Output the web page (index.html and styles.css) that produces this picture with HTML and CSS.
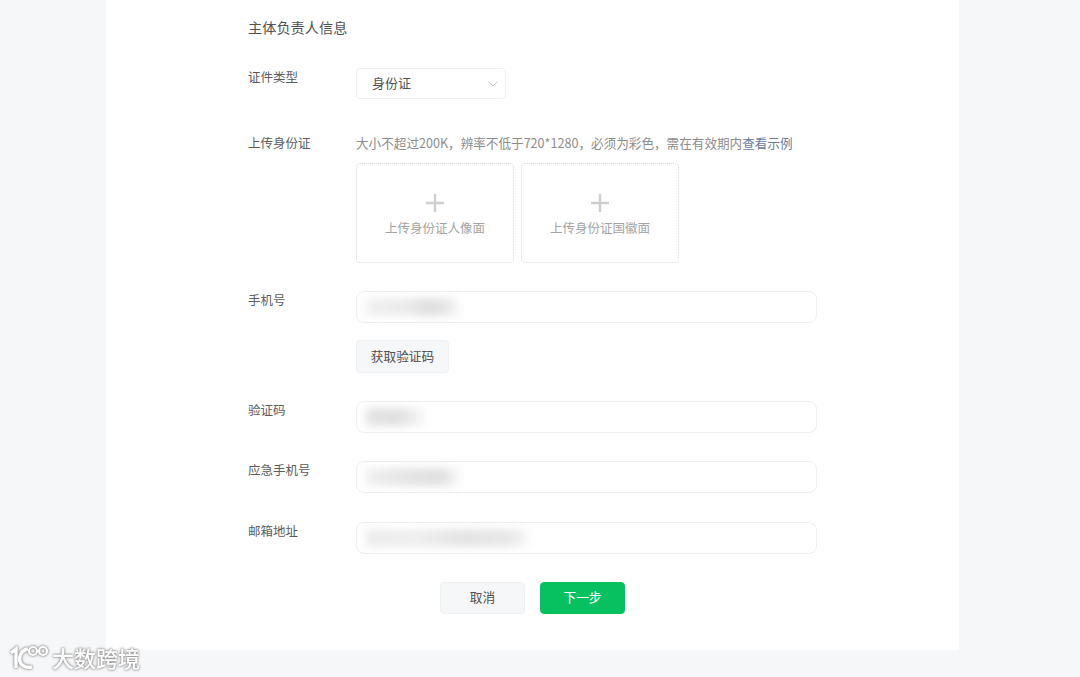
FILE: index.html
```html
<!DOCTYPE html>
<html lang="zh">
    <head>
        <meta charset="utf-8">
        <title>主体负责人信息</title>
        <link rel="stylesheet" href="styles.css">
    </head>
    <body>
        <div class="panel">
            <h2 class="title">主体负责人信息</h2>
            <div class="row row-type">
                <label class="label">证件类型</label>
                <div class="select">
                    <span>身份证</span>
                    <svg class="arrow" width="10" height="6" viewBox="0 0 10 6"><path d="M0.5 0.5 L5 5 L9.5 0.5" fill="none" stroke="#c4c6cb" stroke-width="1"/></svg>
                </div>
            </div>
            <div class="row row-upload">
                <label class="label">上传身份证</label>
                <div class="control">
                    <p class="hint">大小不超过200K，辨率不低于720*1280，必须为彩色，需在有效期内<a class="link">查看示例</a></p>
                    <div class="uploads">
                        <div class="upload">
                            <svg class="plus" width="20" height="20" viewBox="0 0 20 20"><path d="M10 1 V19 M1 10 H19" stroke="#cfcfcf" stroke-width="2.4"/></svg>
                            <span>上传身份证人像面</span>
                        </div>
                        <div class="upload">
                            <svg class="plus" width="20" height="20" viewBox="0 0 20 20"><path d="M10 1 V19 M1 10 H19" stroke="#cfcfcf" stroke-width="2.4"/></svg>
                            <span>上传身份证国徽面</span>
                        </div>
                    </div>
                </div>
            </div>
            <div class="row">
                <label class="label">手机号</label>
                <div class="control">
                    <div class="input"><span class="smudge smudge-phone"></span></div>
                    <button class="btn btn-code">获取验证码</button>
                </div>
            </div>
            <div class="row">
                <label class="label">验证码</label>
                <div class="control">
                    <div class="input"><span class="smudge smudge-code"></span></div>
                </div>
            </div>
            <div class="row">
                <label class="label">应急手机号</label>
                <div class="control">
                    <div class="input"><span class="smudge smudge-backup"></span></div>
                </div>
            </div>
            <div class="row row-mail">
                <label class="label">邮箱地址</label>
                <div class="control">
                    <div class="input"><span class="smudge smudge-mail"></span></div>
                </div>
            </div>
            <div class="actions">
                <button class="btn btn-cancel">取消</button>
                <button class="btn btn-next">下一步</button>
            </div>
        </div>
        <div class="watermark">
            <svg class="wm-logo" width="40" height="26" viewBox="0 0 40 26">
                <path d="M2 9 L7 5 V24" fill="none" stroke="#fff" stroke-width="3.4"/>
                <path d="M19 5 C13 6 10.500 11 10.500 15 C10.500 20 15 24.500 23 23" fill="none" stroke="#fff" stroke-width="3.4"/>
                <circle cx="24" cy="7" r="4" fill="none" stroke="#fff" stroke-width="2.2"/>
                <circle cx="34" cy="7" r="4" fill="none" stroke="#fff" stroke-width="2.2"/>
            </svg>
            <span class="wm-text">大数跨境</span>
        </div>
    </body>
</html>
```

FILE: styles.css
```css
body{
    margin: 0;
    height: 677px;
    overflow: hidden;
    background-color: #f6f7f9;
    font-family: "Noto Sans CJK SC", "Liberation Sans", sans-serif;
    font-size: 12.5px;
    color: #5c5c5c;
}
.panel{
    width: 711px;
    height: 633px;
    margin-left: 106px;
    padding: 17px 0 0 142px;
    background-color: #fff;
    display: flex;
    flex-direction: column;
    gap: 28px;
}
.title{
    margin: 0 0 3px;
    font-size: 14.2px;
    font-weight: normal;
    line-height: 20px;
    color: #505050;
}
.row{
    display: flex;
}
.row-upload{
    margin-top: 7px;
}
.row-mail{
    margin-top: 1px;
}
.label{
    width: 108px;
    flex-shrink: 0;
    margin-top: -1px;
    line-height: 20px;
}
.control{
    width: 461px;
    display: flex;
    flex-direction: column;
    align-items: flex-start;
}
.select{
    width: 150px;
    height: 31px;
    box-sizing: border-box;
    padding: 0 7px 3px 15px;
    border: 1px solid #eeeff2;
    border-radius: 4px;
    display: flex;
    align-items: center;
    justify-content: space-between;
    font-size: 13px;
    color: #505050;
}
.arrow{
    margin-top: 4px;
}
.hint{
    margin: -1px 0 10px;
    line-height: 20px;
    font-size: 12.6px;
    color: #8c8c8c;
    white-space: nowrap;
}
.link{
    color: #6a7b9e;
}
.uploads{
    display: flex;
    gap: 7px;
}
.upload{
    width: 158px;
    height: 100px;
    box-sizing: border-box;
    border: 1px dotted #d9d9d9;
    border-radius: 4px;
    display: flex;
    flex-direction: column;
    align-items: center;
    padding-top: 29px;
    line-height: 20px;
    color: #a3a3a3;
}
.plus{
    margin-bottom: 5px;
}
.input{
    width: 461px;
    height: 32px;
    box-sizing: border-box;
    border: 1px solid #eeeff2;
    border-radius: 8px;
    padding: 6px 9px;
}
.smudge{
    display: block;
    height: 18px;
    filter: blur(4px);
}
.smudge-phone{
    width: 94px;
    background: linear-gradient(90deg, #f0f0f0 0%, #ebebeb 45%, #dedede 65%, #e6e6e6 85%, #fafafa 100%);
}
.smudge-code{
    width: 60px;
    background: linear-gradient(90deg, #e4e4e4 0%, #e0e0e0 55%, #fafafa 100%);
}
.smudge-backup{
    width: 94px;
    background: linear-gradient(90deg, #f0f0f0 0%, #e3e3e3 50%, #e0e0e0 80%, #fafafa 100%);
}
.smudge-mail{
    width: 164px;
    background: linear-gradient(90deg, #ececec 0%, #efefef 30%, #e4e4e4 60%, #e8e8e8 88%, #fbfbfb 100%);
}
.btn{
    font-family: inherit;
    font-size: 12.7px;
    padding: 0 0 3px;
    border-radius: 4px;
    border: 1px solid #eff0f3;
    background-color: #f6f7f9;
    color: #505050;
}
.btn-code{
    width: 93px;
    height: 33px;
    margin-top: 17px;
}
.actions{
    display: flex;
    gap: 15px;
    margin-left: 192px;
}
.btn-cancel,.btn-next{
    width: 85px;
    height: 32px;
}
.btn-next{
    background-color: #07c160;
    border-color: #07c160;
    color: #fff;
}
.watermark{
    position: absolute;
    left: 9px;
    top: 643px;
    display: flex;
    align-items: center;
    gap: 3px;
    filter: drop-shadow(0 0 1px #8a8a8a) drop-shadow(0 0 1px #b5b5b5);
    color: #fff;
}
.wm-text{
    font-size: 22px;
    font-weight: 500;
    line-height: 28px;
}
```
